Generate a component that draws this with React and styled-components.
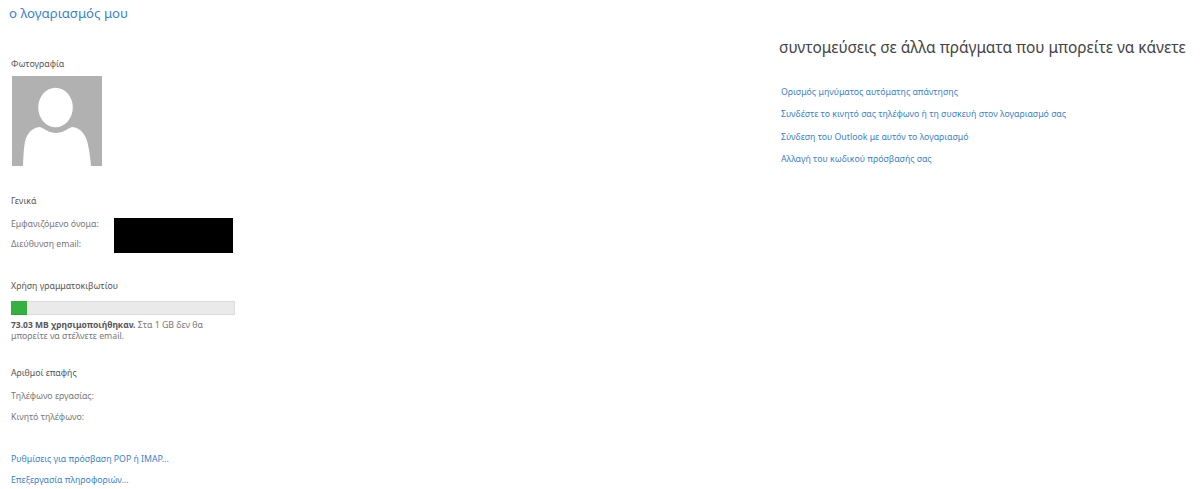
import React from "react";
import styled, { createGlobalStyle } from "styled-components";

const Global = createGlobalStyle`
  html, body { margin: 0; padding: 0; background: #fff; }
  body { font-family: "Noto Sans", "Open Sans", sans-serif; font-size: 8.75px; color: #666; overflow: hidden; }
`;
const Page = styled.div`
  display: flex; justify-content: space-between; width: 1200px; height: 489px; overflow: hidden;
`;
const LeftColumn = styled.div`
  width: 224px; margin-left: 11px; display: flex; flex-direction: column;
`;
const RightColumn = styled.div`
  width: 421px; display: flex; flex-direction: column;
`;
const PageTitle = styled.h1`
  margin: 4px 0 0 -2px; font-size: 13.2px; line-height: 18px; font-weight: 400; color: #3a83c9;
`;
const SideTitle = styled.h2`
  margin: 37px 0 0; font-size: 15.4px; line-height: 22px; font-weight: 400; color: #444; white-space: nowrap;
`;
const Heading = styled.div`
  margin-top: ${p => p.$top}px; line-height: 12px; color: #555;
`;
const Avatar = styled.svg`
  display: block; width: 90px; height: 90px; margin: 6px 0 0 1px;
`;
const Details = styled.div`
  display: grid; grid-template-columns: 103px 119px; grid-template-rows: 16px 19px; margin-top: 11px;
`;
const Label = styled.div`
  line-height: 12px; padding-top: ${p => p.$pad}px; white-space: nowrap; color: #777;
`;
const Redaction = styled.div`
  grid-column: 2; grid-row: 1 / span 2; background: #000;
`;
const Meter = styled.div`
  height: 14px; margin-top: 9px; background: #eaeaea; border: 1px solid #dcdcdc; box-sizing: border-box;
`;
const MeterFill = styled.div`
  height: 14px; margin: -1px 0 0 -1px; background: #35b141; border-bottom: 1px solid #2aa336; box-sizing: border-box;
`;
const Note = styled.p`
  margin: 4px 0 0; line-height: 11px; width: 215px; color: #777;
  strong { font-size: 8.5px; font-weight: 700; color: #555; }
`;
const Row = styled.div`
  margin-top: ${p => p.$top}px; line-height: 12px; color: #777;
`;
const Link = styled.a`
  display: block; margin-top: ${p => p.$top}px; line-height: 12px; color: #3a83c9; white-space: nowrap; padding-left: ${p => p.$indent || 0}px;
`;

function Person() {
  return (
    <Avatar viewBox="0 0 90 90">
      <rect width="90" height="90" fill="#b1b1b1" />
      <ellipse cx="43.5" cy="31.5" rx="17.3" ry="19.7" fill="#fff" />
      <path d="M11 90 C11.5 78 12 65 15 60 C18 54 24 51 28 51 C33 53 37 57 44 57 C51 57 55 53 60 51 C64 51 70 54 73 60 C76 65 78 78 79 90 Z" fill="#fff" />
    </Avatar>
  );
}

export default function App() {
  const used = 16;
  return (
    <Page>
      <Global />
      <LeftColumn>
        <PageTitle>ο λογαριασμός μου</PageTitle>
        <Heading $top={36}>Φωτογραφία</Heading>
        <Person />
        <Heading $top={29}>Γενικά</Heading>
        <Details>
          <Label $pad={0}>Εμφανιζόμενο όνομα:</Label>
          <Redaction />
          <Label $pad={4}>Διεύθυνση email:</Label>
        </Details>
        <Heading $top={27}>Χρήση γραμματοκιβωτίου</Heading>
        <Meter><MeterFill style={{ width: used }} /></Meter>
        <Note><strong>73.03 MB χρησιμοποιήθηκαν.</strong> Στα 1 GB δεν θα μπορείτε να στέλνετε email.</Note>
        <Heading $top={25}>Αριθμοί επαφής</Heading>
        <Row $top={11}>Τηλέφωνο εργασίας:</Row>
        <Row $top={8.5}>Κινητό τηλέφωνο:</Row>
        <Link $top={30}>Ρυθμίσεις για πρόσβαση POP ή IMAP...</Link>
        <Link $top={9}>Επεξεργασία πληροφοριών...</Link>
      </LeftColumn>
      <RightColumn>
        <SideTitle>συντομεύσεις σε άλλα πράγματα που μπορείτε να κάνετε</SideTitle>
        <Link $top={27} $indent={2}>Ορισμός μηνύματος αυτόματης απάντησης</Link>
        <Link $top={10} $indent={2}>Συνδέστε το κινητό σας τηλέφωνο ή τη συσκευή στον λογαριασμό σας</Link>
        <Link $top={10.5} $indent={2}>Σύνδεση του Outlook με αυτόν το λογαριασμό</Link>
        <Link $top={10.5} $indent={2}>Αλλαγή του κωδικού πρόσβασής σας</Link>
      </RightColumn>
    </Page>
  );
}
